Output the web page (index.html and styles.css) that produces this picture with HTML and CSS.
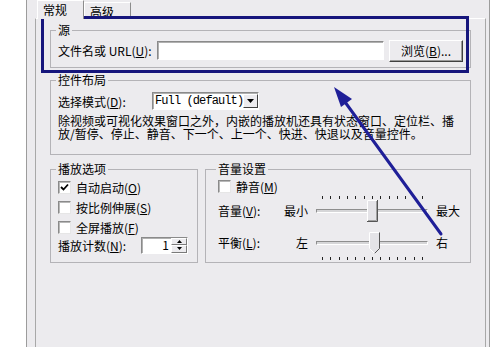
FILE: index.html
```html
<!DOCTYPE html>
<html lang="zh-CN">
<head>
  <meta charset="UTF-8">
  <meta name="viewport" content="width=device-width, initial-scale=1.0">
  <title>播放机属性</title>
  <link rel="stylesheet" href="styles.css">
</head>
<body>

  <div class="dialog">
    <div class="tabs">
      <div class="tab active">常规</div>
      <div class="tab">高级</div>
    </div>

    <div class="panel">
      <fieldset class="group group-source">
        <legend>源</legend>
        <div class="row">
          <label class="lbl-file">文件名或 URL(<u>U</u>):</label>
          <div class="textbox"></div>
          <div class="button">浏览(<u>B</u>)...</div>
        </div>
      </fieldset>

      <fieldset class="group group-layout">
        <legend>控件布局</legend>
        <div class="row row-mode">
          <label class="lbl-mode">选择模式(<u>D</u>):</label>
          <div class="select">
            <span class="select-text">Full (default)</span>
            <span class="select-btn">
              <svg width="7" height="4" viewBox="0 0 7 4"><path d="M0 0H7L3.5 4Z" fill="#000"/></svg>
            </span>
          </div>
        </div>
        <p class="desc">除视频或可视化效果窗口之外，内嵌的播放机还具有状态窗口、定位栏、播<br>放/暂停、停止、静音、下一个、上一个、快进、快退以及音量控件。</p>
      </fieldset>

      <div class="columns">
        <fieldset class="group group-play">
          <legend>播放选项</legend>
          <div class="check-row">
            <span class="checkbox">
              <svg width="9" height="9" viewBox="0 0 9 9"><path d="M1 4L3.5 6.5L8 1.5" stroke="#000" stroke-width="1.8" fill="none"/></svg>
            </span>
            <span>自动启动(<u>O</u>)</span>
          </div>
          <div class="check-row">
            <span class="checkbox"></span>
            <span>按比例伸展(<u>S</u>)</span>
          </div>
          <div class="check-row">
            <span class="checkbox"></span>
            <span>全屏播放(<u>F</u>)</span>
          </div>
          <div class="spin-row">
            <label class="lbl-count">播放计数(<u>N</u>):</label>
            <div class="spinbox">
              <span class="spin-value">1</span>
              <span class="spin-btns">
                <span class="spin-btn"><svg width="5" height="3" viewBox="0 0 5 3"><path d="M0 3H5L2.5 0Z" fill="#000"/></svg></span>
                <span class="spin-btn"><svg width="5" height="3" viewBox="0 0 5 3"><path d="M0 0H5L2.5 3Z" fill="#000"/></svg></span>
              </span>
            </div>
          </div>
        </fieldset>

        <fieldset class="group group-volume">
          <legend>音量设置</legend>
          <div class="check-row mute-row">
            <span class="checkbox"></span>
            <span>静音(<u>M</u>)</span>
          </div>

          <div class="slider-row">
            <span class="slider-label">音量(<u>V</u>):</span>
            <span class="slider-min">最小</span>
            <div class="slider-col">
              <div class="ticks"><i></i><i></i><i></i><i></i><i></i><i></i><i></i><i></i><i></i><i></i><i></i><i></i><i></i></div>
              <div class="slider">
                <div class="track"></div>
                <svg class="thumb thumb-volume" width="11" height="22" viewBox="0 0 11 22">
                  <rect width="11" height="22" fill="#e4e3e7"/>
                  <path d="M0.5 21V0.5H10" stroke="#fff" fill="none"/>
                  <path d="M10.5 0V21.5H0" stroke="#555" fill="none"/>
                  <path d="M9.5 1V20.5H1" stroke="#a0a0a0" fill="none"/>
                </svg>
              </div>
            </div>
            <span class="slider-max">最大</span>
          </div>

          <div class="slider-row slider-row-balance">
            <span class="slider-label">平衡(<u>L</u>):</span>
            <span class="slider-min">左</span>
            <div class="slider-col">
              <div class="slider">
                <div class="track"></div>
                <svg class="thumb thumb-balance" width="11" height="22" viewBox="0 0 11 22">
                  <path d="M0 0H11V16.5L5.5 22L0 16.5Z" fill="#e4e3e7"/>
                  <path d="M0.5 16.5V0.5H10" stroke="#fff" fill="none"/>
                  <path d="M10.5 0.5V16.5L5.5 21.5" stroke="#555" fill="none"/>
                  <path d="M0.5 16.5L5.5 21.5" stroke="#fff" fill="none"/>
                </svg>
              </div>
              <div class="ticks ticks-bottom"><i></i><i></i><i></i><i></i><i></i><i></i><i></i><i></i><i></i><i></i><i></i><i></i><i></i></div>
            </div>
            <span class="slider-max">右</span>
          </div>
        </fieldset>
      </div>
    </div>
  </div>

  <!-- annotation: highlight box and arrow drawn over the dialog -->
  <div class="highlight"></div>
  <svg class="arrow" width="495" height="347" viewBox="0 0 495 347">
    <line x1="441" y1="234" x2="345" y2="102" stroke="#1f1f98" stroke-width="3" stroke-linecap="round"/>
    <polygon points="334,87 341,107 352,99" fill="#1f1f98"/>
  </svg>

</body>
</html>
```

FILE: styles.css
```css
body {
  margin: 0;
  height: 347px;
  overflow: hidden;
  position: relative;
  background-color: #fff;
  font-family: "Noto Sans CJK SC", "Liberation Sans", sans-serif;
  font-size: 12px;
  color: #000;
}

u {
  text-decoration: underline;
  text-underline-offset: 1px;
}

.dialog {
  margin-left: 26px;
  width: 464px;
  height: 347px;
  box-sizing: border-box;
  padding-left: 8px;
  background-color: #ecebee;
  border-left: 1px solid #9c9c9c;
  border-right: 1px solid #9c9c9c;
}

/* Tabs */
.tabs {
  display: flex;
  align-items: flex-end;
  height: 18px;
  padding-left: 2px;
}

.tab {
  position: relative;
  box-sizing: border-box;
  width: 47px;
  height: 16px;
  padding: 2px 0 0 5px;
  line-height: 13px;
  border: 1px solid;
  border-color: #fff #8c8c8c transparent #fff;
  border-bottom: none;
  background-color: #ecebee;
}

.tab.active {
  height: 19px;
  margin-bottom: -1px;
  padding-top: 2px;
  z-index: 1;
}

/* Panel */
.panel {
  width: 451px;
  height: 340px;
  box-sizing: border-box;
  padding: 3px 14px 0;
  border: 1px solid #a8a8a8;
  border-top-color: #fff;
}

.group {
  margin: 0;
  padding: 2px 7px 6px;
  border: 1px solid #b4b3b7;
  min-width: 0;
}

.group legend {
  padding: 0 2px;
  margin-left: -2px;
  height: 16px;
  line-height: 16px;
}

.row {
  display: flex;
  align-items: center;
  height: 21px;
  white-space: nowrap;
}

/* Source */
.lbl-file {
  width: 99px;
}

.textbox {
  width: 227px;
  height: 19px;
  box-sizing: border-box;
  background-color: #fff;
  border: 1px solid;
  border-color: #8a8a8a #fff #fff #8a8a8a;
  box-shadow: inset 1px 1px 0 #b0b0b0;
}

.button {
  margin-left: 5px;
  width: 74px;
  height: 22px;
  box-sizing: border-box;
  text-align: center;
  line-height: 19px;
  background-color: #ecebee;
  border: 1px solid;
  border-color: #fff #404040 #404040 #fff;
  box-shadow: inset -1px -1px 0 #9a9a9a;
}

/* Layout */
.group-layout {
  margin-top: 4px;
  padding: 4px 7px 14px;
}

.row-mode {
  height: 18px;
}

.lbl-mode {
  width: 94px;
}

.select {
  display: flex;
  align-items: center;
  justify-content: space-between;
  width: 107px;
  height: 18px;
  box-sizing: border-box;
  padding: 0 1px 0 2px;
  background-color: #fff;
  border: 1px solid;
  border-color: #8a8a8a #fff #fff #8a8a8a;
  box-shadow: inset 1px 1px 0 #b0b0b0;
}

.select-text {
  flex: none;
  white-space: nowrap;
  font-family: "Liberation Mono", monospace;
  font-size: 12px;
  letter-spacing: -0.9px;
  line-height: 14px;
}

.select-btn {
  display: flex;
  align-items: center;
  justify-content: center;
  flex: none;
  width: 15px;
  height: 14px;
  box-sizing: border-box;
  background-color: #ecebee;
  border: 1px solid;
  border-color: #fff #404040 #404040 #fff;
}

.desc {
  margin: 4px 0 0;
  line-height: 13px;
}

/* Bottom columns */
.columns {
  display: grid;
  grid-template-columns: 148px 266px;
  column-gap: 7px;
  margin-top: 6px;
}

.group-play {
  padding: 0 7px 8px;
}

.group-volume {
  padding: 0 6px 2px 12px;
}

.check-row {
  display: flex;
  align-items: center;
  gap: 5px;
  height: 20px;
  white-space: nowrap;
}

.mute-row {
  height: 19px;
}

.checkbox {
  display: flex;
  align-items: center;
  justify-content: center;
  width: 13px;
  height: 13px;
  box-sizing: border-box;
  background-color: #fff;
  border: 1px solid;
  border-color: #8a8a8a #e6e6e6 #e6e6e6 #8a8a8a;
  box-shadow: inset 1px 1px 0 #b8b8b8;
}

.spin-row {
  display: flex;
  align-items: center;
  height: 18px;
  margin-top: -1px;
  white-space: nowrap;
}

.lbl-count {
  width: 83px;
}

.spinbox {
  display: flex;
  align-items: center;
  width: 47px;
  height: 17px;
  box-sizing: border-box;
  background-color: #fff;
  border: 1px solid;
  border-color: #8a8a8a #fff #fff #8a8a8a;
  box-shadow: inset 1px 1px 0 #b0b0b0;
}

.spin-value {
  flex: 1;
  text-align: right;
  padding-right: 2px;
  line-height: 14px;
}

.spin-btns {
  display: flex;
  flex-direction: column;
  width: 16px;
  height: 15px;
}

.spin-btn {
  display: flex;
  align-items: center;
  justify-content: center;
  flex: 1;
  box-sizing: border-box;
  background-color: #ecebee;
  border: 1px solid;
  border-color: #fff #7a7a7a #7a7a7a #fff;
}

/* Sliders */
.slider-row {
  display: grid;
  grid-template-columns: 52px 38px 128px auto;
  align-items: end;
  white-space: nowrap;
}

.slider-row-balance {
  align-items: start;
  margin-top: 10px;
}

.slider-label,
.slider-min,
.slider-max {
  line-height: 22px;
}

.slider-min {
  text-align: right;
}

.slider-col {
  padding: 0 8px;
}

.ticks {
  display: flex;
  justify-content: space-between;
  height: 4px;
  padding: 0 5px 0 6px;
}

.ticks i {
  width: 1px;
  height: 3px;
  background-color: #222;
}

.ticks-bottom {
  height: 3px;
  padding-top: 3px;
  align-items: flex-end;
}

.slider {
  position: relative;
  height: 22px;
  padding-top: 9px;
  box-sizing: border-box;
}

.track {
  height: 4px;
  box-sizing: border-box;
  background-color: #d6d6d8;
  border: 1px solid;
  border-color: #8e8e8e #fff #fff #8e8e8e;
}

.thumb {
  position: absolute;
  top: 0;
}

.thumb-volume {
  left: 51px;
}

.thumb-balance {
  left: 53px;
}

/* Annotation overlay */
.highlight {
  position: absolute;
  left: 41px;
  top: 16px;
  width: 428px;
  height: 57px;
  box-sizing: border-box;
  border: 3px solid #16167c;
}

.arrow {
  position: absolute;
  left: 0;
  top: 0;
  pointer-events: none;
}
```
